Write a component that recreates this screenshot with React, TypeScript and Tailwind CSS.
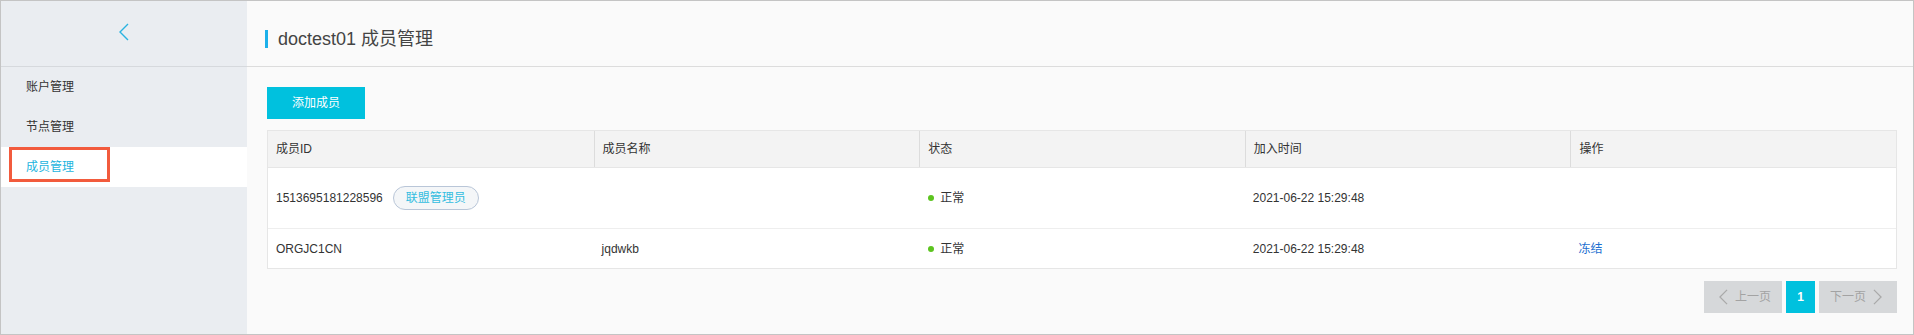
import React from "react";

const FONT = { fontFamily: '"Liberation Sans", "Noto Sans CJK SC", sans-serif' };

interface Member {
  id: string;
  name: string;
  admin: boolean;
  status: string;
  joined: string;
  canFreeze: boolean;
}

const members: Member[] = [
  {
    id: "1513695181228596",
    name: "",
    admin: true,
    status: "正常",
    joined: "2021-06-22 15:29:48",
    canFreeze: false,
  },
  {
    id: "ORGJC1CN",
    name: "jqdwkb",
    admin: false,
    status: "正常",
    joined: "2021-06-22 15:29:48",
    canFreeze: true,
  },
];

const columns = ["成员ID", "成员名称", "状态", "加入时间", "操作"];

function Chevron({ dir, className }: { dir: "left" | "right"; className?: string }) {
  return (
    <svg viewBox="0 0 10 18" className={className} fill="none" stroke="currentColor" strokeWidth="1.4">
      {dir === "left" ? <path d="M9 1 1 9l8 8" /> : <path d="M1 1l8 8-8 8" />}
    </svg>
  );
}

function Sidebar() {
  const items = ["账户管理", "节点管理", "成员管理"];
  return (
    <aside className="w-[246px] shrink-0 bg-[#eaedf1] flex flex-col">
      <div className="h-[66px] border-b border-[#d6d9dd] flex items-start justify-center pt-[22px]">
        <Chevron dir="left" className="w-[10px] h-[18px] text-[#2ab3e0]" />
      </div>
      <nav className="flex flex-col">
        {items.map((label, i) =>
          i === 2 ? (
            <div key={label} className="h-[40px] bg-white flex items-start">
              <div className="ml-[8px] w-[101px] h-[35px] border-[3px] border-[#f25b3d] flex items-center pl-[14px] pt-[4px] text-[12px] text-[#1db4de]">
                {label}
              </div>
            </div>
          ) : (
            <div key={label} className="h-[40px] flex items-center pl-[25px] text-[12px] text-[#333]">
              {label}
            </div>
          )
        )}
      </nav>
    </aside>
  );
}

function MemberTable() {
  return (
    <div className="border border-[#e6e6e6] bg-white">
      <div className="grid grid-cols-5 h-[37px] bg-[#f3f3f3] border-b border-[#e6e6e6]">
        {columns.map((c, i) => (
          <div
            key={c}
            className={`flex items-center pl-[8px] text-[12px] text-[#333] ${i > 0 ? "border-l border-[#dcdcdc]" : ""}`}
          >
            {c}
          </div>
        ))}
      </div>
      {members.map((m, idx) => (
        <div
          key={m.id}
          className={`grid grid-cols-5 text-[12px] text-[#333] ${idx === 0 ? "h-[61px] border-b border-[#eeeeee]" : "h-[39px]"}`}
        >
          <div className="flex items-center pl-[8px] gap-[10px]">
            <span>{m.id}</span>
            {m.admin && (
              <span className="h-[24px] px-[12px] rounded-full border border-[#b9c6d8] bg-[#f4f6f8] text-[#33bde0] flex items-center">
                联盟管理员
              </span>
            )}
          </div>
          <div className="flex items-center pl-[8px]">{m.name}</div>
          <div className="flex items-center pl-[9px] gap-[6px]">
            <span className="w-[6px] h-[6px] rounded-full bg-[#5cc41f]" />
            <span>{m.status}</span>
          </div>
          <div className="flex items-center pl-[8px]">{m.joined}</div>
          <div className="flex items-center pl-[8px]">
            {m.canFreeze && <span className="text-[#1e6fd0]">冻结</span>}
          </div>
        </div>
      ))}
    </div>
  );
}

function Pagination() {
  return (
    <div className="flex justify-end gap-[4px] mt-[12px]">
      <button className="w-[78px] h-[32px] bg-[#d6d8da] flex items-center pl-[15px] gap-[7px] text-[12px] text-[#a3a3a3]">
        <Chevron dir="left" className="w-[9px] h-[16px] text-[#a9a9a9]" />
        上一页
      </button>
      <button className="w-[29px] h-[32px] bg-[#00c1de] text-white text-[12px] font-bold flex items-center justify-center">
        1
      </button>
      <button className="w-[78px] h-[32px] bg-[#d6d8da] flex items-center pl-[11px] gap-[7px] text-[12px] text-[#a3a3a3]">
        下一页
        <Chevron dir="right" className="w-[9px] h-[16px] text-[#a9a9a9]" />
      </button>
    </div>
  );
}

export default function App() {
  return (
    <div style={FONT} className="w-[1914px] h-[335px] border border-[#c4c4c4] flex bg-[#fafafa] overflow-hidden">
      <Sidebar />
      <main className="flex-1 flex flex-col">
        <header className="h-[66px] border-b border-[#dcdcdc] flex items-start pl-[18px] pt-[29px]">
          <span className="w-[3px] h-[18px] bg-[#1cb0ea]" />
          <h1 className="ml-[10px] text-[18px] leading-[18px] text-[#444]">doctest01 成员管理</h1>
        </header>
        <div className="pl-[20px] pr-[16px] pt-[20px]">
          <button className="w-[98px] h-[32px] bg-[#00c1de] text-white text-[12px]">添加成员</button>
          <div className="mt-[11px]">
            <MemberTable />
          </div>
          <Pagination />
        </div>
      </main>
    </div>
  );
}
